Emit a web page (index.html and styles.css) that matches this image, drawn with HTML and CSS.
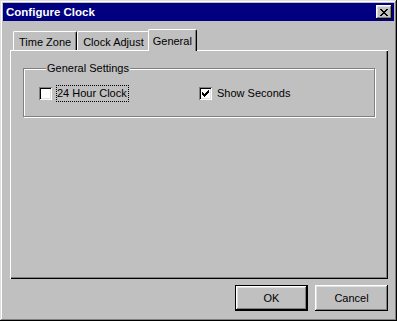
FILE: index.html
```html
<!DOCTYPE html>
<html lang="en">
<head>
    <meta charset="UTF-8">
    <title>Configure Clock</title>
    <link rel="stylesheet" href="styles.css">
</head>
<body>
    <div class="window">
        <div class="titlebar">
            <span class="title">Configure Clock</span>
            <button class="close-btn">
                <svg width="8" height="7" viewBox="0 0 8 7"><path fill="#000" d="M0 0h2v1H0zM6 0h2v1H6zM1 1h2v1H1zM5 1h2v1H5zM2 2h4v1H2zM3 3h2v1H3zM2 4h4v1H2zM1 5h2v1H1zM5 5h2v1H5zM0 6h2v1H0zM6 6h2v1H6z"/></svg>
            </button>
        </div>
        <div class="content">
            <div class="tabs">
                <div class="tab">Time Zone</div>
                <div class="tab">Clock Adjust</div>
                <div class="tab active">General</div>
            </div>
            <div class="panel">
                <fieldset class="group">
                    <legend>General Settings</legend>
                    <div class="options">
                        <label class="check">
                            <span class="box"></span>
                            <span class="caption focused">24 Hour Clock</span>
                        </label>
                        <label class="check">
                            <span class="box">
                                <svg width="7" height="7" viewBox="0 0 7 7"><path fill="#000" d="M0 2h1v3H0zM1 3h1v3H1zM2 4h1v3H2zM3 3h1v3H3zM4 2h1v3H4zM5 1h1v3H5zM6 0h1v3H6z"/></svg>
                            </span>
                            <span class="caption">Show Seconds</span>
                        </label>
                    </div>
                </fieldset>
            </div>
            <div class="buttons">
                <button class="btn default">OK</button>
                <button class="btn">Cancel</button>
            </div>
        </div>
    </div>
</body>
</html>
```

FILE: styles.css
```css
body {
    margin: 0;
    background-color: #c0c0c0;
    font-family: "Liberation Sans", Arial, sans-serif;
    font-size: 11px;
    color: #000;
}

.window {
    width: 397px;
    height: 321px;
    box-sizing: border-box;
    padding: 3px;
    display: flex;
    flex-direction: column;
    background-color: #c0c0c0;
    box-shadow: inset -1px -1px #000, inset 1px 1px #dfdfdf, inset -2px -2px #808080, inset 2px 2px #fff;
}

.titlebar {
    flex: none;
    height: 18px;
    background-color: #000080;
    color: #fff;
    display: flex;
    align-items: center;
    justify-content: space-between;
    padding: 0 2px 0 3px;
}

.title {
    font-weight: bold;
    font-size: 11.5px;
}

.close-btn {
    width: 16px;
    height: 14px;
    padding: 0;
    border: none;
    background-color: #c0c0c0;
    display: flex;
    align-items: center;
    justify-content: center;
    box-shadow: inset -1px -1px #000, inset 1px 1px #fff, inset -2px -2px #808080, inset 2px 2px #dfdfdf;
}

.content {
    flex: 1;
    display: flex;
    flex-direction: column;
    padding: 8px 6px 7px 7px;
}

.tabs {
    flex: none;
    height: 21px;
    display: flex;
    align-items: flex-end;
    padding-left: 3px;
}

.tab {
    box-sizing: border-box;
    height: 19px;
    padding: 2px 5px 0 5px;
    line-height: 16px;
    border-top: 1px solid #fff;
    border-left: 1px solid #fff;
    border-right: 1px solid #000;
    border-top-left-radius: 2px;
    border-top-right-radius: 2px;
    box-shadow: inset -1px 0 #808080;
    background-color: #c0c0c0;
}

.tab.active {
    height: 22px;
    padding: 3px 4px 0 4px;
    margin: 0 -2px -1px;
    position: relative;
    z-index: 1;
}

.panel {
    flex: 1;
    padding: 12px 13px 0;
    box-shadow: inset 1px 1px #fff, inset -1px -1px #000, inset -2px -2px #808080;
}

.group {
    margin: 0;
    min-width: 0;
    padding: 10px 0 14px 15px;
    border: 1px solid #808080;
    box-shadow: inset 1px 1px #fff, 1px 1px #fff;
}

.group legend {
    margin-left: 7px;
    padding: 0 1px;
    line-height: 13px;
    background-color: #c0c0c0;
}

.options {
    display: grid;
    grid-template-columns: 160px auto;
}

.check {
    display: flex;
    align-items: center;
    gap: 4px;
}

.box {
    box-sizing: border-box;
    width: 13px;
    height: 13px;
    background-color: #fff;
    display: flex;
    align-items: center;
    justify-content: center;
    box-shadow: inset 1px 1px #808080, inset -1px -1px #fff, inset 2px 2px #000, inset -2px -2px #dfdfdf;
}

.caption {
    line-height: 15px;
    padding-right: 1px;
    border: 1px solid transparent;
}

.caption.focused {
    border: 1px dotted #000;
}

.buttons {
    flex: none;
    display: flex;
    justify-content: flex-end;
    gap: 7px;
    margin-top: 6px;
}

.btn {
    box-sizing: border-box;
    width: 73px;
    height: 26px;
    padding: 0;
    border: none;
    background-color: #c0c0c0;
    font-family: "Liberation Sans", Arial, sans-serif;
    font-size: 11px;
    color: #000;
    box-shadow: inset -1px -1px #000, inset 1px 1px #fff, inset -2px -2px #808080, inset 2px 2px #dfdfdf;
}

.btn.default {
    border: 1px solid #000;
}
```
